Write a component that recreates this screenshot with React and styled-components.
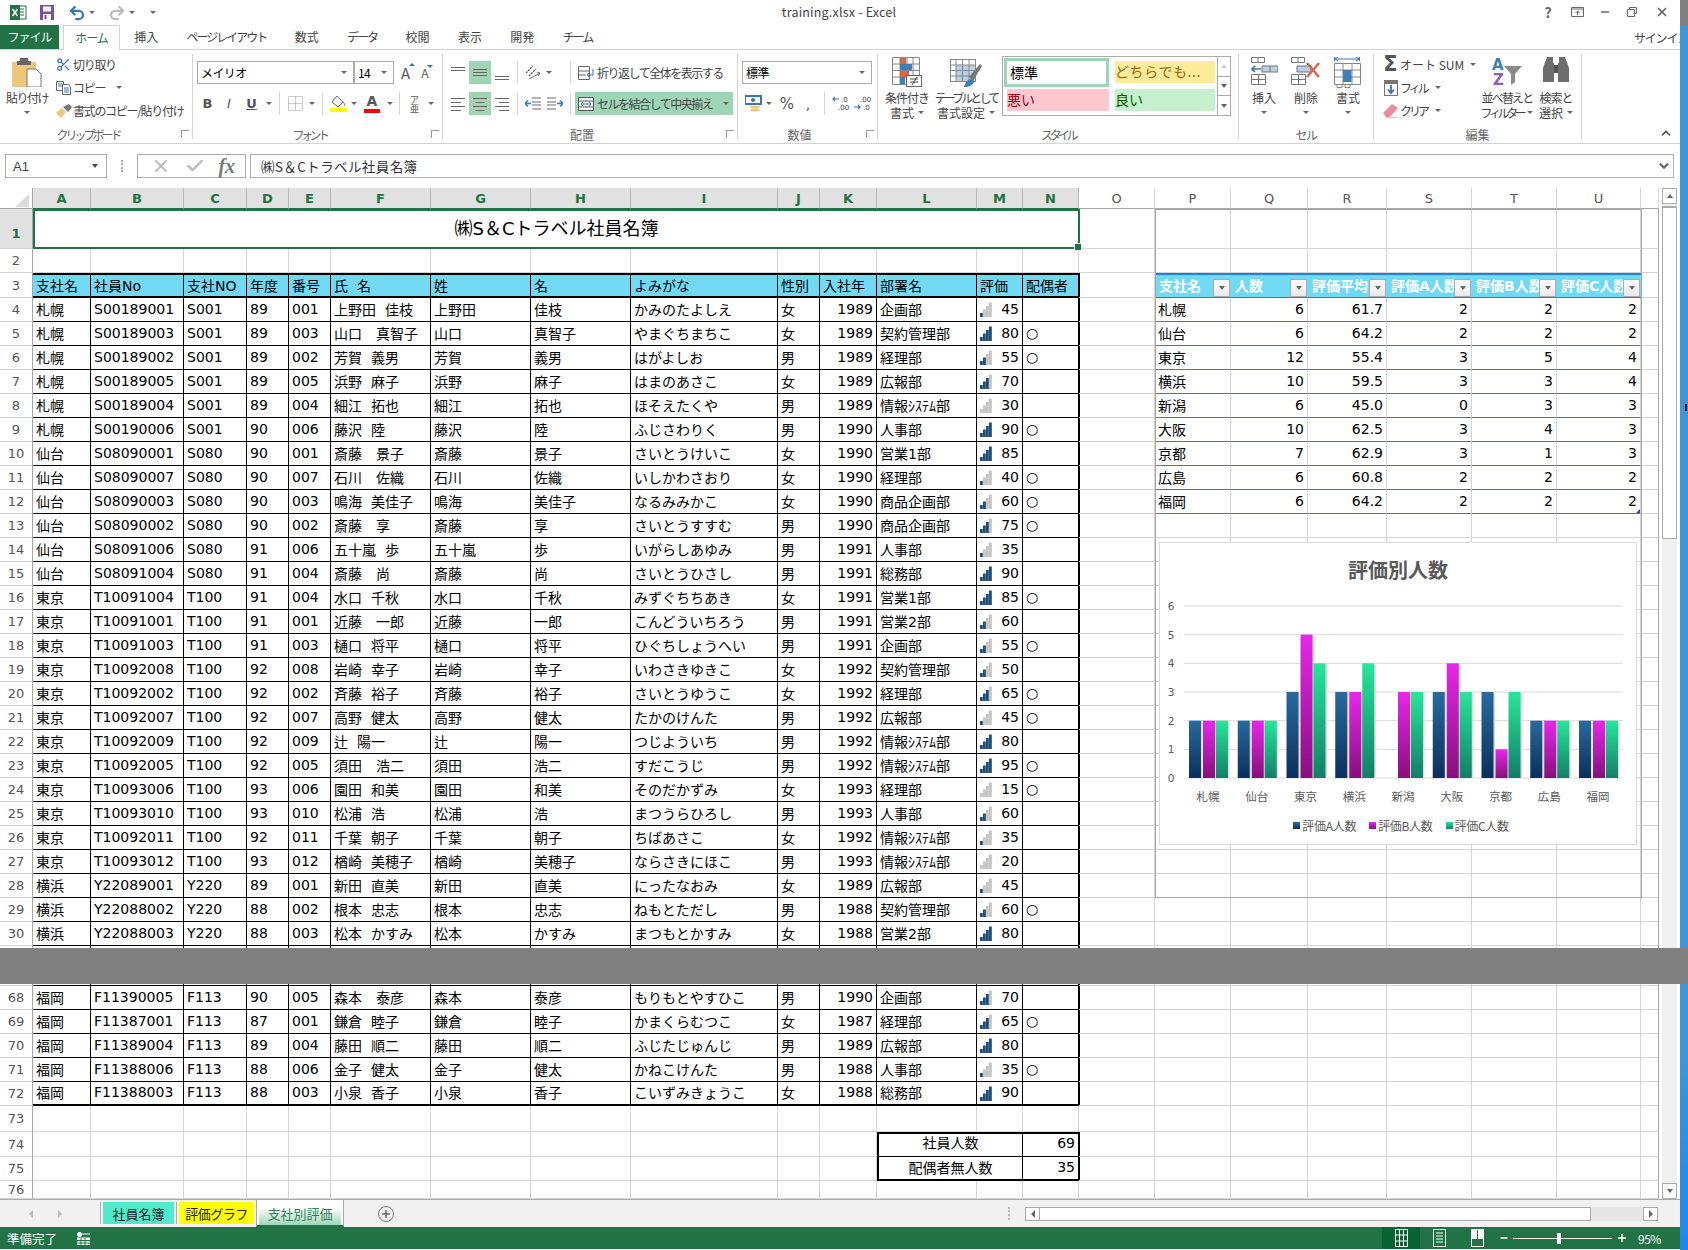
import React from 'react'
import styled, { createGlobalStyle } from 'styled-components'
import { ChevronDown, ChevronUp, Scissors, Undo2, Redo2, X, Check, Plus, Minus } from 'lucide-react'

const uiFont = '"Noto Sans CJK JP", "Noto Sans", sans-serif'
const cellFont = '"DejaVu Sans", "Noto Sans CJK JP", sans-serif'
const GREEN = '#217346'
const GRID = '#d4d4d4'

const GlobalStyle = createGlobalStyle`
  html, body { margin: 0; padding: 0; background: #fff; overflow: hidden; }
  * { box-sizing: border-box; }
`

const Page = styled.div`
  position: relative;
  width: 1688px;
  height: 1250px;
  display: flex;
  overflow: hidden;
  font-family: ${uiFont};
  color: #444;
`
const Main = styled.div`
  width: 1680px;
  display: flex;
  flex-direction: column;
`
const Strip = styled.div`
  position: relative;
  width: 8px;
  background: linear-gradient(#808080 0 26px, #3f95d6 26px, #3f95d6 85%, #1e88e8);
`
const StripMark = styled.i`
  position: absolute;
  left: 5px;
  top: 404px;
  width: 2px;
  height: 7px;
  background: #222;
`
const Band = styled.div`
  position: absolute;
  left: 0;
  top: 948px;
  width: 1688px;
  height: 36px;
  background: #808080;
  z-index: 6;
`

/* title bar */
const TitleBar = styled.div`
  position: relative;
  height: 25px;
  display: flex;
  align-items: center;
  padding-left: 10px;
`
const Qat = styled.div`
  display: flex;
  align-items: center;
  width: ${p => p.$w}px;
  gap: 3px;
`
const Title = styled.div`
  position: absolute;
  left: 0;
  top: 3px;
  width: 1678px;
  text-align: center;
  font-size: 12.5px;
  line-height: 18px;
  letter-spacing: 0.2px;
  color: #444;
`
const WinButtons = styled.div`
  position: absolute;
  right: 0;
  top: 2px;
  display: flex;
  align-items: center;
`
const WinButton = styled.div`
  width: ${p => p.$w || 28}px;
  height: 20px;
  display: flex;
  align-items: center;
  justify-content: center;
  color: #666;
  font-weight: 700;
  font-size: 14px;
`

/* ribbon tabs */
const TabRow = styled.div`
  position: relative;
  height: 25px;
  display: flex;
  border-bottom: 1px solid ${GRID};
  font-size: 12px;
  line-height: 22px;
`
const FileTab = styled.div`
  width: 59px;
  background: ${GREEN};
  color: #fff;
  display: flex;
  align-items: center;
  justify-content: center;
  letter-spacing: -1px;
  margin-right: 4px;
`
const HomeTab = styled.div`
  width: 57px;
  height: 25px;
  background: #fff;
  color: ${GREEN};
  border: 1px solid ${GRID};
  border-bottom: none;
  display: flex;
  align-items: center;
  justify-content: center;
  letter-spacing: -1px;
`
const Tab = styled.div`
  padding: 0 14.2px;
  display: flex;
  align-items: center;
  color: #444;
  letter-spacing: ${p => p.$tight || 0}px;
`
const SignIn = styled.div`
  position: absolute;
  right: -8px;
  top: 2px;
  letter-spacing: -1.2px;
  width: 54px;
  overflow: hidden;
  white-space: nowrap;
`

/* ribbon */
const Ribbon = styled.div`
  height: 94px;
  display: flex;
  border-bottom: 1px solid ${GRID};
  font-size: 12px;
`
const Group = styled.div`
  position: relative;
  width: ${p => p.$w}px;
  height: 85px;
  flex: none;
  margin-top: 4px;
  border-right: ${p => (p.$last ? 'none' : `1px solid ${GRID}`)};
`
const GroupBody = styled.div`
  height: 72px;
  display: flex;
  padding-left: ${p => p.$pl || 0}px;
`
const GroupLabel = styled.div`
  height: 18px;
  line-height: 18px;
  text-align: center;
  font-size: 12px;
  color: #666;
  white-space: nowrap;
  letter-spacing: ${p => p.$ls || 0}px;
  padding-right: ${p => (p.$launcher ? 16 : 0)}px;
`
const Launcher = styled.div`
  position: absolute;
  right: 3px;
  bottom: 1px;
  width: 8px;
  height: 8px;
  border-left: 1px solid #999;
  border-top: 1px solid #999;
`
const BigButton = styled.div`
  width: ${p => p.$w}px;
  flex: none;
  display: flex;
  flex-direction: column;
  align-items: center;
  padding-top: 3px;
  margin-right: ${p => p.$mr || 0}px;
`
const BigIcon = styled.div`
  height: 33px;
  display: flex;
  align-items: flex-start;
  justify-content: center;
`
const BigLabel = styled.div`
  height: 15px;
  line-height: 15px;
  white-space: nowrap;
  letter-spacing: ${p => p.$ls ?? -1}px;
  display: flex;
  align-items: center;
  gap: 4px;
`
const Caret = styled.i`
  display: block;
  flex: none;
  width: 0;
  height: 0;
  border-left: 3px solid transparent;
  border-right: 3px solid transparent;
  border-top: 3px solid #666;
  margin-left: ${p => p.$ml || 0}px;
`
const BigCaret = styled.div`
  height: 15px;
  display: flex;
  align-items: center;
`
const SmallColumn = styled.div`
  width: ${p => p.$w}px;
  flex: none;
  display: flex;
  flex-direction: column;
  margin-top: -1px;
`
const SmallRow = styled.div`
  height: 23px;
  display: flex;
  align-items: center;
  white-space: nowrap;
  letter-spacing: ${p => p.$ls ?? -1.3}px;
`
const SmallIcon = styled.div`
  width: 19px;
  flex: none;
  display: flex;
  justify-content: center;
`
const ToolStack = styled.div`
  display: flex;
  flex-direction: column;
  gap: 8px;
  padding-top: 7px;
`
const ToolRow = styled.div`
  height: 23px;
  display: flex;
  align-items: center;
`
const Tool = styled.div`
  width: ${p => p.$w}px;
  height: 23px;
  flex: none;
  display: flex;
  align-items: center;
  justify-content: center;
  background: ${p => (p.$on ? '#9fd5b7' : 'transparent')};
  color: #555;
  font-family: ${cellFont};
  font-size: ${p => p.$fs || 13}px;
  font-weight: ${p => (p.$bold ? 700 : 400)};
  font-style: ${p => (p.$italic ? 'italic' : 'normal')};
  text-decoration: ${p => (p.$under ? 'underline' : 'none')};
`
const ToolCaret = styled.div`
  width: ${p => p.$w || 10}px;
  flex: none;
  display: flex;
  justify-content: center;
`
const RowSep = styled.div`
  width: ${p => p.$w || 9}px;
  height: 23px;
  flex: none;
  display: flex;
  justify-content: center;
  &::after { content: ''; width: 1px; height: 100%; background: ${GRID}; }
`
const Gap = styled.div`
  width: ${p => p.$w}px;
  flex: none;
`
const Combo = styled.div`
  width: ${p => p.$w}px;
  height: 23px;
  flex: none;
  background: #fff;
  border: 1px solid #ababab;
  margin-left: ${p => p.$ml || 0}px;
  display: flex;
  align-items: center;
  justify-content: space-between;
  padding: 0 6px 0 3px;
  color: #000;
  font-size: 12px;
  letter-spacing: -0.6px;
`
const WideButton = styled.div`
  width: 158px;
  height: 23px;
  flex: none;
  display: flex;
  align-items: center;
  padding-left: 3px;
  gap: 3px;
  white-space: nowrap;
  letter-spacing: -1.5px;
  background: ${p => (p.$on ? '#9fd5b7' : 'transparent')};
`
const Gallery = styled.div`
  width: 229px;
  height: 60px;
  flex: none;
  margin-top: 2px;
  border: 1px solid #ababab;
  display: flex;
`
const GalleryGrid = styled.div`
  flex: 1;
  display: grid;
  grid-template-columns: 108px 106px;
  grid-template-rows: 31px 1fr;
`
const StyleCell = styled.div`
  margin: ${p => p.$m};
  padding: 0 0 2px ${p => (p.$sel ? 3 : 0)}px;
  background: ${p => p.$bg};
  color: ${p => p.$fg};
  border: ${p => (p.$sel ? '3px solid #9fd5b7' : 'none')};
  display: flex;
  align-items: center;
  font-size: 14px;
  letter-spacing: ${p => p.$ls || 0}px;
  white-space: nowrap;
`
const GalleryScroll = styled.div`
  width: 14px;
  border-left: 1px solid #ababab;
  display: flex;
  flex-direction: column;
`
const GalleryButton = styled.div`
  flex: 1;
  display: flex;
  align-items: center;
  justify-content: center;
  color: ${p => (p.$dim ? '#ccc' : '#666')};
  border-bottom: ${p => (p.$end ? 'none' : '1px solid #ababab')};
`
const UpTri = styled.i`
  display: block;
  width: 0;
  height: 0;
  border-left: 3px solid transparent;
  border-right: 3px solid transparent;
  border-bottom: 4px solid currentColor;
`
const DownTri = styled.i`
  display: block;
  width: 0;
  height: 0;
  border-left: 3px solid transparent;
  border-right: 3px solid transparent;
  border-top: 4px solid currentColor;
`
const Collapse = styled.div`
  position: absolute;
  right: 7px;
  bottom: 3px;
  color: #555;
  display: flex;
`
const RibbonFill = styled.div`
  position: relative;
  flex: 1;
`
const SigmaText = styled.span`
  font-family: ${cellFont};
  font-size: 21px;
  font-weight: 700;
  line-height: 1;
  color: #555;
`
const FontA = styled.div`
  display: flex;
  flex-direction: column;
  align-items: center;
  font-weight: 700;
  font-size: 14px;
  line-height: 12px;
  &::after { content: ''; width: 16px; height: 4px; margin-top: 2px; background: #f00; }
`
const GrowA = styled.span`
  font-size: ${p => p.$fs}px;
  position: relative;
  color: #555;
  &::after {
    content: '';
    position: absolute;
    right: -5px;
    top: 1px;
    border-left: 3px solid transparent;
    border-right: 3px solid transparent;
    ${p => (p.$up ? 'border-bottom: 3px solid #3a75b0;' : 'border-top: 3px solid #3a75b0;')}
  }
`
const Ruby = styled.div`
  display: flex;
  flex-direction: column;
  align-items: center;
  line-height: 9px;
  font-family: ${uiFont};
  font-size: 9px;
  color: #555;
`
const NumFormat = styled.div`
  font-family: ${cellFont};
  font-size: ${p => p.$fs || 15}px;
  color: #555;
`

/* formula bar */
const FormulaBar = styled.div`
  height: 44px;
  padding: 10px 6px 8px 5px;
  display: flex;
  align-items: flex-start;
  flex: none;
`
const NameBox = styled.div`
  width: 102px;
  height: 24px;
  border: 1px solid #ababab;
  display: flex;
  align-items: center;
  justify-content: space-between;
  padding: 0 8px 0 7px;
  font-family: "Liberation Sans", sans-serif;
  font-size: 13px;
  color: #444;
`
const Grip = styled.div`
  width: 30px;
  height: 24px;
  display: flex;
  align-items: center;
  justify-content: center;
  &::after { content: ''; height: 12px; border-left: 2px dotted #aaa; }
`
const FxBox = styled.div`
  width: 109px;
  height: 24px;
  border: 1px solid #ababab;
  display: flex;
  align-items: center;
  justify-content: space-around;
  padding: 0 3px 0 6px;
  color: #bfbfbf;
`
const FxText = styled.span`
  font-family: "Liberation Serif", serif;
  font-size: 20px;
  font-style: italic;
  font-weight: 700;
  color: #7a7a7a;
`
const FormulaInput = styled.div`
  flex: 1;
  height: 24px;
  margin-left: 4px;
  border: 1px solid #ababab;
  display: flex;
  align-items: center;
  justify-content: space-between;
  padding: 0 2px 0 10px;
  font-size: 13.5px;
  color: #333;
  letter-spacing: 0.4px;
`

/* sheet */
const COLS = '33px 58px 93px 63px 42px 42px 100px 100px 100px 147px 42px 57px 100px 46px 56px 76px 76px 77px 79px 85px 85px 84px 18px'

const SheetArea = styled.div`
  height: 1011px;
  flex: none;
  display: flex;
`
const Grid = styled.div`
  position: relative;
  width: 1659px;
  height: 1011px;
  overflow: hidden;
  font-family: ${cellFont};
  font-size: 14px;
  color: #000;
`
const SheetRow = styled.div`
  display: grid;
  grid-template-columns: ${COLS};
  height: ${p => p.$h}px;
`
const Corner = styled.div`
  border-right: 1px solid #a6a6a6;
  border-bottom: 1px solid #a6a6a6;
  display: flex;
  align-items: flex-end;
  justify-content: flex-end;
  padding: 0 3px 1px 0;
  &::after {
    content: '';
    border-left: 14px solid transparent;
    border-bottom: 13px solid #dcdcdc;
  }
`
const ColHead = styled.div`
  background: ${p => (p.$on ? '#e1e1e1' : '#fff')};
  color: ${p => (p.$on ? GREEN : '#555')};
  font-weight: ${p => (p.$on ? 700 : 400)};
  border-right: 1px solid ${p => (p.$on ? '#b5b5b5' : GRID)};
  border-bottom: 1px solid ${p => (p.$on ? GREEN : '#a6a6a6')};
  display: flex;
  align-items: center;
  justify-content: center;
  font-size: 13px;
`
const RowHead = styled.div`
  background: ${p => (p.$on ? '#e1e1e1' : '#fff')};
  color: ${p => (p.$on ? GREEN : '#555')};
  font-weight: ${p => (p.$on ? 700 : 400)};
  border-right: 1px solid #a6a6a6;
  border-bottom: 1px solid ${GRID};
  padding-top: ${p => (p.$on ? 10 : 0)}px;
  display: flex;
  align-items: center;
  justify-content: center;
  font-size: 13px;
`
const Cell = styled.div`
  position: relative;
  grid-column: span ${p => p.$span || 1};
  display: flex;
  align-items: center;
  justify-content: ${p => ({ r: 'flex-end', c: 'center' }[p.$align] || 'flex-start')};
  padding: 0 3px ${p => p.$pb ?? 2}px 3px;
  white-space: pre;
  overflow: hidden;
  border-right: ${p => (p.$thickR ? '2px solid #000' : `1px solid ${p.$black ? '#000' : GRID}`)};
  margin-right: ${p => (p.$thickR ? -1 : 0)}px;
  border-bottom: ${p => (p.$thickB ? '2px solid #000' : `1px solid ${p.$black ? '#000' : GRID}`)};
  border-top: ${p => (p.$thickT ? '2px solid #000' : 'none')};
  border-left: ${p => (p.$thickL ? '2px solid #000' : 'none')};
  background: ${p => p.$bg || 'transparent'};
`
const RightEdge = styled.div`
  border-right: 1px solid #a6a6a6;
  border-bottom: 1px solid ${GRID};
`
const SheetTitle = styled.div`
  position: relative;
  grid-column: span 14;
  margin-right: -1px;
  padding-bottom: 5px;
  border: 2px solid ${GREEN};
  display: flex;
  align-items: center;
  justify-content: center;
  font-size: 18px;
  font-family: ${cellFont};
  z-index: 2;
`
const FillHandle = styled.i`
  position: absolute;
  right: -4px;
  bottom: -4px;
  width: 6px;
  height: 6px;
  background: ${GREEN};
  border: 1px solid #fff;
  box-sizing: content-box;
`
const TableHead = styled(Cell)`
  background: #72d9f5;
  color: #000;
`
const PivotHead = styled(Cell)`
  background: #72d9f5;
  color: #fff;
  font-weight: 700;
  border-top: 2px solid #1e7fe8;
  border-bottom: 1px solid #1e7fe8;
  border-right: none;
  padding-left: 4px;
  overflow: hidden;
`
const PivotCell = styled(Cell)`
  border-bottom: 1px solid #1e7fe8;
`
const FilterButton = styled.div`
  position: absolute;
  right: 1px;
  bottom: 0;
  width: 17px;
  height: 18px;
  border: 1px solid #ababab;
  background: linear-gradient(#fff, #e9e9e9);
  color: #666;
  display: flex;
  align-items: center;
  justify-content: center;
`
const RatingCell = styled(Cell)`
  justify-content: space-between;
  padding-right: 3px;
`
const TableCorner = styled.i`
  position: absolute;
  right: 0;
  bottom: 0;
  border-left: 4px solid transparent;
  border-bottom: 4px solid #2a50b8;
`
const PageFrame = styled.div`
  position: absolute;
  left: 1155px;
  top: 21px;
  width: 487px;
  height: 689px;
  border: 1px solid #a6a6a6;
  pointer-events: none;
  z-index: 1;
`

/* chart */
const ChartPanel = styled.div`
  position: absolute;
  left: 1159px;
  top: 354px;
  width: 478px;
  height: 303px;
  background: #fff;
  border: 1px solid #d9d9d9;
  display: flex;
  flex-direction: column;
  font-family: ${uiFont};
  z-index: 3;
`
const ChartTitle = styled.div`
  height: 53px;
  display: flex;
  align-items: center;
  justify-content: center;
  font-size: 20px;
  font-weight: 700;
  color: #595959;
`
const Legend = styled.div`
  flex: 1;
  display: flex;
  align-items: center;
  justify-content: center;
  gap: 13px;
  font-size: 12px;
  color: #595959;
  letter-spacing: -0.3px;
  padding: 0 0 6px 6px;
`
const LegendItem = styled.div`
  display: flex;
  align-items: center;
  gap: 2px;
`
const LegendSwatch = styled.i`
  width: 7px;
  height: 7px;
  background: linear-gradient(${p => p.$top}, ${p => p.$bottom});
`

/* scrollbars */
const VScroll = styled.div`
  width: 15px;
  height: 1011px;
  margin: 0 3px;
  display: flex;
  flex-direction: column;
  background: #f0f0f0;
`
const ScrollButton = styled.div`
  height: 16px;
  flex: none;
  background: #fff;
  border: 1px solid #ababab;
  color: #666;
  display: flex;
  align-items: center;
  justify-content: center;
`
const VThumb = styled.div`
  height: 333px;
  flex: none;
  margin-top: 2px;
  background: #fff;
  border: 1px solid #ababab;
  border-top: 2px solid #ababab;
`
const VTrack = styled.div`
  flex: 1;
`

/* sheet tabs */
const TabBar = styled.div`
  position: relative;
  height: 28px;
  flex: none;
  display: flex;
  align-items: flex-start;
  background: #f1f1f1;
  border-top: 1px solid #ababab;
  font-size: 13px;
  color: #bbb;
`
const NavArrow = styled.div`
  width: ${p => p.$w}px;
  height: 27px;
  display: flex;
  align-items: center;
  justify-content: flex-end;
  color: #bbb;
`
const LeftTri = styled.i`
  border-top: 4px solid transparent;
  border-bottom: 4px solid transparent;
  border-right: 4px solid currentColor;
`
const RightTri = styled.i`
  border-top: 4px solid transparent;
  border-bottom: 4px solid transparent;
  border-left: 4px solid currentColor;
`
const TabSep = styled.div`
  width: 1px;
  height: 22px;
  margin: 2px 2px 0 ${p => p.$ml || 0}px;
  background: #ababab;
`
const SheetTab = styled.div`
  width: ${p => p.$w}px;
  height: 22px;
  margin-top: 2px;
  background: ${p => p.$bg};
  color: #222;
  display: flex;
  align-items: center;
  justify-content: center;
  letter-spacing: ${p => p.$ls || 0}px;
`
const ActiveTab = styled.div`
  width: 88px;
  height: 28px;
  margin: -1px 0 0 2px;
  padding: 1px 2px 0;
  background: #fff;
  border: 1px solid #ababab;
  border-bottom: 2px solid ${GREEN};
  color: #2f7f5b;
  display: flex;
  align-items: stretch;
`
const ActiveInner = styled.div`
  flex: 1;
  background: linear-gradient(#fff 30%, #9fd5b7);
  display: flex;
  align-items: center;
  justify-content: center;
`
const AddSheet = styled.div`
  position: absolute;
  left: 378px;
  top: 6px;
  width: 16px;
  height: 16px;
  border: 1px solid #777;
  border-radius: 50%;
  color: #666;
  display: flex;
  align-items: center;
  justify-content: center;
`
const HScrollGrip = styled.div`
  position: absolute;
  left: 1008px;
  top: 7px;
  height: 13px;
  border-left: 2px dotted #bbb;
`
const HScroll = styled.div`
  position: absolute;
  left: 1025px;
  top: 7px;
  width: 633px;
  height: 14px;
  display: flex;
  background: #e6e6e6;
`
const HScrollButton = styled.div`
  width: 15px;
  background: #fff;
  border: 1px solid #ababab;
  color: #666;
  display: flex;
  align-items: center;
  justify-content: center;
`
const HThumb = styled.div`
  width: 551px;
  background: #fff;
  border: 1px solid #ababab;
  border-left: none;
`
const HTrack = styled.div`
  flex: 1;
`

/* status bar */
const StatusBar = styled.div`
  position: relative;
  height: 22px;
  flex: none;
  background: ${GREEN};
  color: #fff;
  display: flex;
  align-items: center;
  padding-left: 7px;
  font-size: 12.5px;
`
const StatusRight = styled.div`
  position: absolute;
  left: 1382px;
  top: 0;
  height: 22px;
  display: flex;
  align-items: center;
`
const ViewButton = styled.div`
  width: ${p => p.$w}px;
  height: 22px;
  display: flex;
  align-items: center;
  justify-content: center;
  background: ${p => (p.$on ? '#0a6332' : 'transparent')};
`
const ZoomTrack = styled.div`
  position: relative;
  width: 99px;
  height: 1px;
  margin: 0 4px;
  background: #fff;
`
const ZoomThumb = styled.i`
  position: absolute;
  left: 44px;
  top: -5px;
  width: 4px;
  height: 11px;
  background: #fff;
`
const ZoomText = styled.div`
  margin-left: 10px;
  font-size: 12px;
  letter-spacing: -0.5px;
`

/* icons */
const ExcelIcon = () => (
  <svg width="17" height="17" viewBox="0 0 17 17">
    <rect x="6" y="2" width="10" height="13" fill="#fff" stroke={GREEN} />
    <path d="M9 5h5M9 8h5M9 11h5" stroke={GREEN} />
    <rect x="0" y="1" width="10" height="15" fill={GREEN} />
    <path d="M2.500 5l5 7M7.500 5l-5 7" stroke="#fff" strokeWidth="1.6" />
  </svg>
)
const SaveIcon = () => (
  <svg width="14" height="15" viewBox="0 0 14 15">
    <path d="M0 0h14v15H0z" fill="#7f4ea0" />
    <rect x="3" y="1.500" width="8" height="5" fill="#fff" />
    <rect x="3" y="9" width="8" height="6" fill="#fff" />
    <rect x="4.500" y="10" width="2" height="4" fill="#7f4ea0" />
  </svg>
)
const PasteIcon = () => (
  <svg width="30" height="30" viewBox="0 0 30 30">
    <rect x="0" y="5" width="24" height="25" rx="1" fill="#efc77c" />
    <path d="M8 1h8v3h3v4H5V4h3z" fill="#666" />
    <path d="M15 12h9l5 5v13H15z" fill="#fff" stroke="#777" />
  </svg>
)
const CopyIcon = () => (
  <svg width="15" height="14" viewBox="0 0 15 14">
    <path d="M.5.5h7v9h-7z" fill="#fff" stroke="#666" />
    <path d="M6.500 3.500h6l2 2v8h-8z" fill="#fff" stroke="#666" />
    <path d="M8 7h5M8 9h5M8 11h5M2 3h4M2 5h4" stroke="#3a75b0" />
  </svg>
)
const BrushIcon = () => (
  <svg width="16" height="14" viewBox="0 0 16 14">
    <path d="M0 9l6-5 4 4-5 6z" fill="#efc77c" />
    <path d="M7 3l6-3 3 3-4 5z" fill="#777" />
  </svg>
)
const BorderIcon = () => (
  <svg width="15" height="15" viewBox="0 0 15 15">
    <path d="M.5.5h14v14H.5zM7.500.5v14M.5 7.500h14" fill="none" stroke="#999" strokeDasharray="1 1" />
  </svg>
)
const FillIcon = () => (
  <svg width="17" height="17" viewBox="0 0 17 17">
    <path d="M7 1l6 6-5 5-6-5z" fill="#fff" stroke="#666" />
    <path d="M13 7c2 2 2 3 1 4" stroke="#666" fill="none" />
    <rect x="0" y="13" width="17" height="4" fill="#ff0" />
  </svg>
)
const Lines = ({ align = 'left', v = 'full' }) => {
  const widths = [14, align === 'center' ? 9 : 10, 14, align === 'center' ? 9 : 10]
  const x = w => (align === 'left' ? 0 : align === 'right' ? 14 - w : (14 - w) / 2)
  const all = v === 'top' ? [3, 6] : v === 'bottom' ? [12, 15] : v === 'mid' ? [5, 8, 11] : [3, 7, 11, 15]
  return (
    <svg width="14" height="17" viewBox="0 0 14 17">
      {all.map((y, i) => (
        <rect key={y} x={v === 'full' ? x(widths[i]) : 0} y={y} width={v === 'full' ? widths[i] : 14} height="1" fill="#666" />
      ))}
    </svg>
  )
}
const OrientIcon = () => (
  <svg width="17" height="15" viewBox="0 0 17 15">
    <path d="M1 8l7-7M4 11l7-7" stroke="#666" strokeWidth="1.5" strokeDasharray="2 1" />
    <path d="M4 14l11-6M15 8l-3-1M15 8l-2 3" stroke="#666" fill="none" />
  </svg>
)
const IndentIcon = ({ flip }) => (
  <svg width="16" height="13" viewBox="0 0 16 13" style={flip ? { transform: 'scaleX(-1)' } : undefined}>
    <path d="M7 1h9M7 5h9M7 8h9M7 12h9" stroke="#666" />
    <path d="M0 6.500h6M3 3.500l-3 3 3 3" stroke="#3a75b0" strokeWidth="1.4" fill="none" />
  </svg>
)
const WrapIcon = () => (
  <svg width="16" height="14" viewBox="0 0 16 14">
    <path d="M.5.5h11v13H.5zM.5 5h11M.5 9h7" fill="none" stroke="#666" />
    <path d="M15 3v6h-6M11 7l-2 2 2 2" fill="none" stroke="#3a75b0" />
  </svg>
)
const MergeIcon = () => (
  <svg width="16" height="14" viewBox="0 0 16 14">
    <path d="M.5.5h15v13H.5zM.5 4h15M.5 10h15" fill="#fff" stroke="#555" />
    <path d="M3 7h10M5 5l-2 2 2 2M11 5l2 2-2 2" fill="none" stroke="#3a75b0" />
  </svg>
)
const MoneyIcon = () => (
  <svg width="17" height="17" viewBox="0 0 17 17">
    <rect x="0" y="1" width="16" height="8" fill="#fff" stroke="#3a75b0" strokeWidth="2" />
    <circle cx="8" cy="5" r="2" fill="#3a75b0" />
    <ellipse cx="10" cy="12" rx="5" ry="1.6" fill="#efc77c" />
    <ellipse cx="10" cy="15" rx="5" ry="1.6" fill="#efc77c" />
  </svg>
)
const DecimalIcon = ({ inc }) => (
  <svg width="18" height="15" viewBox="0 0 18 15" fontFamily="DejaVu Sans" fontSize="7" fill="#444">
    {inc ? (
      <>
        <text x="6" y="6">.00</text>
        <text x="9" y="14">.0</text>
        <path d="M0 11h6M4 9l2 2-2 2" stroke="#3a75b0" fill="none" strokeWidth="1.2" />
      </>
    ) : (
      <>
        <text x="9" y="6">.0</text>
        <text x="6" y="14">.00</text>
        <path d="M1 3h6M3 1L1 3l2 2" stroke="#3a75b0" fill="none" strokeWidth="1.2" />
      </>
    )}
  </svg>
)
const CondIcon = () => (
  <svg width="30" height="30" viewBox="0 0 30 30">
    <path d="M.5.5h27v27H.5zM.5 7h27M.5 13.500h27M.5 20h27M8 .5v27M15 .5v27M21 .5v27" fill="#fff" stroke="#888" />
    <rect x="8" y="1" width="6" height="6" fill="#d4674a" />
    <rect x="8" y="7" width="12" height="6" fill="#3f7fb8" />
    <rect x="8" y="14" width="9" height="6" fill="#d4674a" />
    <rect x="8" y="20" width="5" height="7" fill="#3f7fb8" />
    <rect x="14.500" y="18.500" width="15" height="11" fill="#fff" stroke="#666" />
    <path d="M18 22h8M18 25h8M25 20l-5 8" stroke="#444" />
  </svg>
)
const TableIcon = () => (
  <svg width="32" height="30" viewBox="0 0 32 30">
    <rect x=".5" y="2.500" width="25" height="22" fill="#fff" stroke="#888" />
    <rect x="6" y="8" width="19" height="16" fill="#b8cfe6" />
    <path d="M.5 8h25M.5 13.500h25M.5 19h25M6 2.500v22M12.500 2.500v22M19 2.500v22" stroke="#888" fill="none" />
    <path d="M19 20l11-13 2 2-9 15z" fill="#777" />
    <path d="M14 30c1-5 4-8 8-8l2 2c0 4-5 6-10 6z" fill="#3f7fb8" />
  </svg>
)
const InsertIcon = () => (
  <svg width="27" height="28" viewBox="0 0 27 28">
    <path d="M.5.5h13v5H.5zM7 .5v5" fill="#fff" stroke="#777" />
    <rect x="11" y="9" width="16" height="6" fill="#b8cfe6" stroke="#777" />
    <path d="M19 9v6" stroke="#777" />
    <path d="M1 12h9M4 9l-3 3 3 3" stroke="#3a75b0" strokeWidth="1.6" fill="none" />
    <path d="M.5 17.500h14v10H.5zM7.500 17.500v10M.5 22.500h14" fill="#fff" stroke="#777" />
  </svg>
)
const DeleteIcon = () => (
  <svg width="30" height="28" viewBox="0 0 30 28">
    <path d="M.5.5h13v5H.5zM7 .5v5" fill="#fff" stroke="#777" />
    <path d="M6 9h14v6H6z" fill="#b8cfe6" stroke="#777" />
    <path d="M.5 17.500h14v10H.5zM7.500 17.500v10M.5 22.500h14" fill="#fff" stroke="#777" />
    <path d="M16 6l12 14M28 6L16 20" stroke="#d4674a" strokeWidth="2.4" />
  </svg>
)
const FormatIcon = () => (
  <svg width="28" height="32" viewBox="0 0 28 32">
    <path d="M1 2h24M1 2l3-2M1 2l3 2M25 2l-3-2M25 2l-3 2M.5 0v4M25.500 0v4" stroke="#3a75b0" fill="none" />
    <path d="M.5 6.500h26v21H.5zM.5 13h26M.5 20h26M9 6.500v21M18 6.500v21" fill="#fff" stroke="#888" />
    <rect x="9" y="13" width="8.500" height="12" fill="#3f7fb8" />
    <path d="M3 27.500v3h5v-3M11 27.500v3h5v-3" fill="none" stroke="#888" />
  </svg>
)
const FillDownIcon = () => (
  <svg width="14" height="16" viewBox="0 0 14 16">
    <rect x=".5" y=".5" width="13" height="15" fill="#fff" stroke="#777" />
    <rect x="0" y="0" width="14" height="4" fill="#777" />
    <path d="M7 5v8M4 9.500L7 13l3-3.500" stroke="#3a75b0" strokeWidth="1.8" fill="none" />
  </svg>
)
const EraserIcon = () => (
  <svg width="15" height="15" viewBox="0 0 15 15">
    <path d="M0 10L9 1l6 4-8 9H3z" fill="#ee8a9e" />
    <path d="M3 15h12" stroke="#999" />
  </svg>
)
const SortIcon = () => (
  <svg width="30" height="29" viewBox="0 0 30 29" fontFamily="DejaVu Sans" fontWeight="700" fontSize="15">
    <text x="0" y="13" fill="#3f7fb8">A</text>
    <text x="1" y="28" fill="#8f5db5">Z</text>
    <path d="M12 9h18l-7 8v8l-4 3V17z" fill="#8a8a8a" />
  </svg>
)
const BinocularsIcon = () => (
  <svg width="26" height="25" viewBox="0 0 26 25">
    <path d="M4 0h6v6h1v19H0V11zM16 0h6l4 11v14H15V6h1z" fill="#6e6e6e" />
    <rect x="11" y="8" width="4" height="8" fill="#555" />
  </svg>
)
const ReadyMacro = () => (
  <svg width="13" height="13" viewBox="0 0 13 13" style={{ marginLeft: 20 }}>
    <circle cx="2.500" cy="2.500" r="2.500" fill="#fff" />
    <path d="M5 2h8M0 6h13v7H0z" fill="#fff" stroke="#fff" />
    <path d="M0 8.500h13M0 11h13M4 6v7M8 6v7" stroke={GREEN} />
  </svg>
)
const NormalView = () => (
  <svg width="13" height="18" viewBox="0 0 13 18">
    <path d="M.5.5h12v17H.5zM.5 6h12M.5 12h12M4.500.5v17M8.500.5v17" fill="none" stroke="#fff" />
  </svg>
)
const LayoutView = () => (
  <svg width="13" height="18" viewBox="0 0 13 18">
    <rect x=".5" y=".5" width="12" height="17" fill="none" stroke="#fff" />
    <path d="M3 4h7M3 7h7M3 10h7M3 13h7" stroke="#fff" />
  </svg>
)
const BreakView = () => (
  <svg width="13" height="18" viewBox="0 0 13 18">
    <rect x=".5" y=".5" width="12" height="17" fill="none" stroke="#fff" />
    <path d="M1 0h5v10H1zM7 0h5v10H7z" fill="#fff" />
  </svg>
)

const RatingBars = ({ value }) => {
  const on = value >= 79 ? 4 : value >= 63 ? 3 : value >= 47 ? 2 : value >= 31 ? 1 : 0
  return (
    <svg width="12" height="16" viewBox="0 0 12 16" style={{ flex: 'none', marginTop: 3 }}>
      {[0, 1, 2, 3].map(i => (
        <rect
          key={i}
          x={i * 3}
          y={11 - i * 3.5}
          width="2.800"
          height={4 + i * 3.5}
          fill={i < on ? '#1f4e7d' : '#c4c4c4'}
        />
      ))}
    </svg>
  )
}

const chartData = [
  ['札幌', 2, 2, 2], ['仙台', 2, 2, 2], ['東京', 3, 5, 4], ['横浜', 3, 3, 4], ['新潟', 0, 3, 3],
  ['大阪', 3, 4, 3], ['京都', 3, 1, 3], ['広島', 2, 2, 2], ['福岡', 2, 2, 2],
]
const series = [
  { id: 'a', name: '評価A人数', top: '#2a6a9e', bottom: '#0a2f5c', dx: 0 },
  { id: 'b', name: '評価B人数', top: '#e628ea', bottom: '#870f7c', dx: 14 },
  { id: 'c', name: '評価C人数', top: '#28e69a', bottom: '#127e68', dx: 27 },
]

const Chart = () => {
  const y0 = 182
  const step = 28.67
  return (
    <ChartPanel>
      <ChartTitle>評価別人数</ChartTitle>
      <svg width="476" height="216" viewBox="0 0 476 216" fontSize="11.500" fill="#595959">
        <defs>
          {series.map(s => (
            <linearGradient key={s.id} id={s.id} x1="0" y1="0" x2="0" y2="1">
              <stop offset="0" stopColor={s.top} />
              <stop offset="1" stopColor={s.bottom} />
            </linearGradient>
          ))}
        </defs>
        {[0, 1, 2, 3, 4, 5, 6].map(n => (
          <g key={n}>
            <line x1="24" x2="463" y1={y0 - n * step} y2={y0 - n * step} stroke="#d9d9d9" />
            <text x="11" y={y0 - n * step + 4} textAnchor="middle" fontFamily="DejaVu Sans" fontSize="10.500">{n}</text>
          </g>
        ))}
        {chartData.map(([label, ...vals], i) => (
          <g key={label}>
            {vals.map((v, k) => {
              if (!v) return null
              const x = 29 + i * 48.75 + series[k].dx
              return (
                <g key={k}>
                  <rect x={x + 1.5} y={y0 - v * step + 1} width="12" height={v * step - 1} fill="#ddd" />
                  <rect x={x} y={y0 - v * step} width="12" height={v * step} fill={`url(#${series[k].id})`} />
                </g>
              )
            })}
            <text x={48 + i * 48.75} y="205" textAnchor="middle">{label}</text>
          </g>
        ))}
      </svg>
      <Legend>
        {series.map(s => (
          <LegendItem key={s.id}>
            <LegendSwatch $top={s.top} $bottom={s.bottom} />
            {s.name}
          </LegendItem>
        ))}
      </Legend>
    </ChartPanel>
  )
}

const COL_LETTERS = 'ABCDEFGHIJKLMN'.split('')
const EXTRA_LETTERS = ['O', 'P', 'Q', 'R', 'S', 'T', 'U', '']

const headers = ['支社名', '社員No', '支社NO', '年度', '番号', '氏  名', '姓', '名', 'よみがな', '性別', '入社年', '部署名', '評価', '配偶者']
const pivotHeaders = ['支社名', '人数', '評価平均', '評価A人数', '評価B人数', '評価C人数']
const pivotRows = [
  ['札幌', 6, '61.7', 2, 2, 2], ['仙台', 6, '64.2', 2, 2, 2], ['東京', 12, '55.4', 3, 5, 4],
  ['横浜', 10, '59.5', 3, 3, 4], ['新潟', 6, '45.0', 0, 3, 3], ['大阪', 10, '62.5', 3, 4, 3],
  ['京都', 7, '62.9', 3, 1, 3], ['広島', 6, '60.8', 2, 2, 2], ['福岡', 6, '64.2', 2, 2, 2],
]

const topRows = `札幌,S00189001,S001,89,001,上野田 佳枝,かみのたよしえ,女,1989,企画部,45,
札幌,S00189003,S001,89,003,山口　真智子,やまぐちまちこ,女,1989,契約管理部,80,○
札幌,S00189002,S001,89,002,芳賀 義男,はがよしお,男,1989,経理部,55,○
札幌,S00189005,S001,89,005,浜野 麻子,はまのあさこ,女,1989,広報部,70,
札幌,S00189004,S001,89,004,細江 拓也,ほそえたくや,男,1989,情報ｼｽﾃﾑ部,30,
札幌,S00190006,S001,90,006,藤沢 陸,ふじさわりく,男,1990,人事部,90,○
仙台,S08090001,S080,90,001,斎藤　景子,さいとうけいこ,女,1990,営業1部,85,
仙台,S08090007,S080,90,007,石川　佐織,いしかわさおり,女,1990,経理部,40,○
仙台,S08090003,S080,90,003,鳴海 美佳子,なるみみかこ,女,1990,商品企画部,60,○
仙台,S08090002,S080,90,002,斎藤　享,さいとうすすむ,男,1990,商品企画部,75,○
仙台,S08091006,S080,91,006,五十嵐 歩,いがらしあゆみ,男,1991,人事部,35,
仙台,S08091004,S080,91,004,斎藤　尚,さいとうひさし,男,1991,総務部,90,
東京,T10091004,T100,91,004,水口 千秋,みずぐちちあき,女,1991,営業1部,85,○
東京,T10091001,T100,91,001,近藤　一郎,こんどういちろう,男,1991,営業2部,60,
東京,T10091003,T100,91,003,樋口 将平,ひぐちしょうへい,男,1991,企画部,55,○
東京,T10092008,T100,92,008,岩崎 幸子,いわさきゆきこ,女,1992,契約管理部,50,
東京,T10092002,T100,92,002,斉藤 裕子,さいとうゆうこ,女,1992,経理部,65,○
東京,T10092007,T100,92,007,高野 健太,たかのけんた,男,1992,広報部,45,○
東京,T10092009,T100,92,009,辻 陽一,つじよういち,男,1992,情報ｼｽﾃﾑ部,80,
東京,T10092005,T100,92,005,須田　浩二,すだこうじ,男,1992,情報ｼｽﾃﾑ部,95,○
東京,T10093006,T100,93,006,園田 和美,そのだかずみ,女,1993,経理部,15,○
東京,T10093010,T100,93,010,松浦 浩,まつうらひろし,男,1993,人事部,60,
東京,T10092011,T100,92,011,千葉 朝子,ちばあさこ,女,1992,情報ｼｽﾃﾑ部,35,
東京,T10093012,T100,93,012,楢崎 美穂子,ならさきにほこ,男,1993,情報ｼｽﾃﾑ部,20,
横浜,Y22089001,Y220,89,001,新田 直美,にったなおみ,女,1989,広報部,45,
横浜,Y22088002,Y220,88,002,根本 忠志,ねもとただし,男,1988,契約管理部,60,○
横浜,Y22088003,Y220,88,003,松本 かすみ,まつもとかすみ,女,1988,営業2部,80,`.split('\n')

const endRows = `福岡,F11390005,F113,90,005,森本　泰彦,もりもとやすひこ,男,1990,企画部,70,
福岡,F11387001,F113,87,001,鎌倉 睦子,かまくらむつこ,女,1987,経理部,65,○
福岡,F11389004,F113,89,004,藤田 順二,ふじたじゅんじ,男,1989,広報部,80,
福岡,F11388006,F113,88,006,金子 健太,かねこけんた,男,1988,人事部,35,○
福岡,F11388003,F113,88,003,小泉 香子,こいずみきょうこ,女,1988,総務部,90,`.split('\n')

const Blanks = ({ n, black, thickR }) =>
  Array.from({ length: n }, (_, i) => <Cell key={i} $black={black} $thickR={thickR && i === n - 1} />)

const RightSide = ({ pivot, last }) => (
  <>
    <Cell />
    {pivot ? (
      pivot.map((v, i) => (
        <PivotCell key={i} $align={i ? 'r' : 'l'}>
          {v}
          {last && i === 5 && <TableCorner />}
        </PivotCell>
      ))
    ) : (
      <Blanks n={6} />
    )}
    <RightEdge />
  </>
)

const DataRow = ({ n, line, pivot, last, lastRow }) => {
  const [branch, id, code, year, num, name, kana, sex, joined, dept, score, spouse] = line.split(',')
  const [family, given] = name.split(/[ 　]/)
  const full = name.includes('　') ? name : `${family}  ${given}`
  const cells = [branch, id, code, year, num, full, family, given, kana, sex]
  const thickB = lastRow
  return (
    <SheetRow $h={24}>
      <RowHead>{n}</RowHead>
      {cells.map((v, i) => (
        <Cell key={i} $black $thickB={thickB}>{v}</Cell>
      ))}
      <Cell $black $thickB={thickB} $align="r">{joined}</Cell>
      <Cell $black $thickB={thickB}>{dept}</Cell>
      <RatingCell $black $thickB={thickB}>
        <RatingBars value={Number(score)} />
        {score}
      </RatingCell>
      <Cell $black $thickB={thickB} $thickR>{spouse}</Cell>
      <RightSide pivot={pivot} last={last} />
    </SheetRow>
  )
}

const EmptyRow = ({ n, h }) => (
  <SheetRow $h={h}>
    <RowHead>{n}</RowHead>
    <Blanks n={14} />
    <RightSide />
  </SheetRow>
)

const Sheet = () => (
  <Grid>
    <SheetRow $h={21}>
      <Corner />
      {COL_LETTERS.map(c => (
        <ColHead key={c} $on>{c}</ColHead>
      ))}
      {EXTRA_LETTERS.map((c, i) => (
        <ColHead key={i}>{c}</ColHead>
      ))}
    </SheetRow>
    <SheetRow $h={40}>
      <RowHead $on>1</RowHead>
      <SheetTitle>
        ㈱S＆Cトラベル社員名簿
        <FillHandle />
      </SheetTitle>
      <RightSide />
    </SheetRow>
    <EmptyRow n={2} h={24} />
    <SheetRow $h={25}>
      <RowHead>3</RowHead>
      {headers.map((h, i) => (
        <TableHead key={h} $black $thickT $thickB $thickR={i === 13}>{h}</TableHead>
      ))}
      <Cell />
      {pivotHeaders.map(h => (
        <PivotHead key={h}>
          {h}
          <FilterButton><DownTri /></FilterButton>
        </PivotHead>
      ))}
      <RightEdge />
    </SheetRow>
    {topRows.map((line, i) => (
      <DataRow key={i} n={i + 4} line={line} pivot={pivotRows[i]} last={i === 8} />
    ))}
    <SheetRow $h={40}>
      <RowHead />
      <Blanks n={14} black thickR />
      <RightSide />
    </SheetRow>
    {endRows.map((line, i) => (
      <DataRow key={i} n={i + 68} line={line} lastRow={i === 4} />
    ))}
    <SheetRow $h={26}>
      <RowHead>73</RowHead>
      <Blanks n={14} />
      <RightSide />
    </SheetRow>
    <SheetRow $h={25}>
      <RowHead>74</RowHead>
      <Blanks n={11} />
      <Cell $span={2} $black $thickL $thickT $align="c" $pb={6}>社員人数</Cell>
      <Cell $black $thickR $thickT $align="r" $pb={5}>69</Cell>
      <RightSide />
    </SheetRow>
    <SheetRow $h={24}>
      <RowHead>75</RowHead>
      <Blanks n={11} />
      <Cell $span={2} $black $thickL $thickB $align="c" $pb={3}>配偶者無人数</Cell>
      <Cell $black $thickR $thickB $align="r" $pb={2}>35</Cell>
      <RightSide />
    </SheetRow>
    <EmptyRow n={76} h={18} />
    <PageFrame />
    <Chart />
  </Grid>
)

/* lines: [text, letter spacing] pairs */
const Big = ({ w, mr, icon, lines, caretLine }) => (
  <BigButton $w={w} $mr={mr}>
    <BigIcon>{icon}</BigIcon>
    {lines.map(([t, ls], i) => (
      <BigLabel key={t} $ls={ls}>
        {t}
        {caretLine && i === lines.length - 1 && <Caret />}
      </BigLabel>
    ))}
    {!caretLine && <BigCaret><Caret /></BigCaret>}
  </BigButton>
)

const RibbonBody = () => (
  <Ribbon>
    <Group $w={193}>
      <GroupBody $pl={6}>
        <Big w={42} mr={6} icon={<PasteIcon />} lines={[['貼り付け', -1.5]]} />
        <SmallColumn $w={130}>
          <SmallRow><SmallIcon><Scissors size={15} color="#3a75b0" /></SmallIcon>切り取り</SmallRow>
          <SmallRow><SmallIcon><CopyIcon /></SmallIcon>コピー<Caret $ml={11} /></SmallRow>
          <SmallRow><SmallIcon><BrushIcon /></SmallIcon>書式のコピー/貼り付け</SmallRow>
        </SmallColumn>
      </GroupBody>
      <GroupLabel $launcher $ls={-3}>クリップボード</GroupLabel>
      <Launcher />
    </Group>

    <Group $w={250}>
      <GroupBody $pl={4}>
        <ToolStack>
          <ToolRow>
            <Combo $w={157}>メイリオ<Caret /></Combo>
            <Combo $w={40}>14<Caret /></Combo>
            <Gap $w={7} />
            <GrowA $fs={15} $up>A</GrowA>
            <Gap $w={11} />
            <GrowA $fs={12}>A</GrowA>
          </ToolRow>
          <ToolRow>
            <Tool $w={21} $bold>B</Tool>
            <Tool $w={22} $italic>I</Tool>
            <Tool $w={23} $under $bold>U</Tool>
            <ToolCaret $w={12}><Caret /></ToolCaret>
            <RowSep $w={8} />
            <Tool $w={24}><BorderIcon /></Tool>
            <ToolCaret><Caret /></ToolCaret>
            <RowSep $w={10} />
            <Tool $w={22}><FillIcon /></Tool>
            <ToolCaret><Caret /></ToolCaret>
            <Tool $w={26}><FontA>A</FontA></Tool>
            <ToolCaret $w={9}><Caret /></ToolCaret>
            <RowSep $w={10} />
            <Tool $w={21}><Ruby>ア<span>亜</span></Ruby></Tool>
            <ToolCaret $w={12}><Caret /></ToolCaret>
          </ToolRow>
        </ToolStack>
      </GroupBody>
      <GroupLabel $launcher $ls={-3.5}>フォント</GroupLabel>
      <Launcher />
    </Group>

    <Group $w={295}>
      <GroupBody $pl={4}>
        <ToolStack>
          <ToolRow>
            <Tool $w={22}><Lines v="top" /></Tool>
            <Tool $w={22} $on><Lines v="mid" /></Tool>
            <Tool $w={22}><Lines v="bottom" /></Tool>
            <RowSep />
            <Tool $w={22}><OrientIcon /></Tool>
            <ToolCaret><Caret /></ToolCaret>
            <Gap $w={12} />
            <RowSep />
            <WideButton><WrapIcon />折り返して全体を表示する</WideButton>
          </ToolRow>
          <ToolRow>
            <Tool $w={22}><Lines align="left" /></Tool>
            <Tool $w={22} $on><Lines align="center" /></Tool>
            <Tool $w={22}><Lines align="right" /></Tool>
            <RowSep />
            <Tool $w={22}><IndentIcon /></Tool>
            <Tool $w={22}><IndentIcon flip /></Tool>
            <RowSep />
            <WideButton $on><MergeIcon />セルを結合して中央揃え<Caret $ml={8} /></WideButton>
          </ToolRow>
        </ToolStack>
      </GroupBody>
      <GroupLabel $launcher>配置</GroupLabel>
      <Launcher />
    </Group>

    <Group $w={140}>
      <GroupBody $pl={4}>
        <ToolStack>
          <ToolRow>
            <Combo $w={130}>標準<Caret /></Combo>
          </ToolRow>
          <ToolRow>
            <Tool $w={22}><MoneyIcon /></Tool>
            <ToolCaret><Caret /></ToolCaret>
            <Gap $w={2} />
            <Tool $w={22}><NumFormat>%</NumFormat></Tool>
            <Tool $w={20}><NumFormat $fs={14}>,</NumFormat></Tool>
            <RowSep $w={12} />
            <Tool $w={22}><DecimalIcon /></Tool>
            <Tool $w={22}><DecimalIcon inc /></Tool>
          </ToolRow>
        </ToolStack>
      </GroupBody>
      <GroupLabel $launcher>数値</GroupLabel>
      <Launcher />
    </Group>

    <Group $w={361}>
      <GroupBody $pl={5}>
        <Big w={48} mr={3} icon={<CondIcon />} lines={[['条件付き', -1], ['書式', 0]]} caretLine />
        <Big w={64} mr={4} icon={<TableIcon />} lines={[['テーブルとして', -2.9], ['書式設定', 0]]} caretLine />
        <Gallery>
          <GalleryGrid>
            <StyleCell $sel $m="1px 2px 1px 1px" $bg="#fff" $fg="#000">標準</StyleCell>
            <StyleCell $m="4px 2px 5px 4px" $bg="#ffeb9c" $fg="#9c6500" $ls={0.6}>どちらでも...</StyleCell>
            <StyleCell $m="1px 2px 4px 4px" $bg="#ffc7ce" $fg="#9c0006">悪い</StyleCell>
            <StyleCell $m="1px 2px 4px 4px" $bg="#c6efce" $fg="#006100">良い</StyleCell>
          </GalleryGrid>
          <GalleryScroll>
            <GalleryButton $dim><UpTri /></GalleryButton>
            <GalleryButton><DownTri /></GalleryButton>
            <GalleryButton $end><DownTri /></GalleryButton>
          </GalleryScroll>
        </Gallery>
      </GroupBody>
      <GroupLabel $ls={-3.5}>スタイル</GroupLabel>
    </Group>

    <Group $w={135}>
      <GroupBody $pl={4}>
        <Big w={42} icon={<InsertIcon />} lines={[['挿入', 0]]} />
        <Big w={42} icon={<DeleteIcon />} lines={[['削除', 0]]} />
        <Big w={42} icon={<FormatIcon />} lines={[['書式', 0]]} />
      </GroupBody>
      <GroupLabel $ls={-1.5}>セル</GroupLabel>
    </Group>

    <Group $w={208}>
      <GroupBody $pl={7}>
        <SmallColumn $w={96}>
          <SmallRow $ls={0}><SmallIcon><SigmaText>Σ</SigmaText></SmallIcon>オート SUM<Caret $ml={6} /></SmallRow>
          <SmallRow $ls={-3}><SmallIcon><FillDownIcon /></SmallIcon>フィル<Caret $ml={8} /></SmallRow>
          <SmallRow $ls={-3}><SmallIcon><EraserIcon /></SmallIcon>クリア<Caret $ml={8} /></SmallRow>
        </SmallColumn>
        <Big w={60} icon={<SortIcon />} lines={[['並べ替えと', -1.8], ['フィルター', -3.4]]} caretLine />
        <Big w={38} icon={<BinocularsIcon />} lines={[['検索と', -1], ['選択', 0]]} caretLine />
      </GroupBody>
      <GroupLabel>編集</GroupLabel>
    </Group>

    <RibbonFill>
      <Collapse><ChevronUp size={14} strokeWidth={3} /></Collapse>
    </RibbonFill>
  </Ribbon>
)

export default function App() {
  return (
    <>
      <GlobalStyle />
      <Page>
        <Main>
          <TitleBar>
            <Qat $w={30}><ExcelIcon /></Qat>
            <Qat $w={28}><SaveIcon /></Qat>
            <Qat $w={40}><Undo2 size={18} color="#3a75b0" strokeWidth={3} /><Caret /></Qat>
            <Qat $w={42}><Redo2 size={18} color="#bbb" strokeWidth={3} /><Caret /></Qat>
            <Qat $w={10}><Caret /></Qat>
            <Title>training.xlsx - Excel</Title>
            <WinButtons>
              <WinButton $w={32}>?</WinButton>
              <WinButton $w={26}><svg width="13" height="10" viewBox="0 0 13 10"><path d="M.5.5h12v9H.5zM.5 2h12M6.500 8V4M4.500 6l2-2 2 2" fill="none" stroke="#666" /></svg></WinButton>
              <WinButton $w={30}><Minus size={12} strokeWidth={3} /></WinButton>
              <WinButton $w={24}><svg width="10" height="10" viewBox="0 0 10 10"><path d="M2.500 2.500V.5h7v6H7.500M.5 2.500h7v7h-7z" fill="none" stroke="#666" /></svg></WinButton>
              <WinButton $w={36}><X size={14} strokeWidth={3} /></WinButton>
            </WinButtons>
          </TitleBar>
          <TabRow>
            <FileTab>ファイル</FileTab>
            <HomeTab>ホーム</HomeTab>
            <Tab>挿入</Tab>
            <Tab $tight={-2}>ページレイアウト</Tab>
            <Tab>数式</Tab>
            <Tab $tight={-2}>データ</Tab>
            <Tab>校閲</Tab>
            <Tab>表示</Tab>
            <Tab>開発</Tab>
            <Tab $tight={-2}>チーム</Tab>
            <SignIn>サインイン</SignIn>
          </TabRow>
          <RibbonBody />
          <FormulaBar>
            <NameBox>A1<DownTri /></NameBox>
            <Grip />
            <FxBox>
              <X size={20} strokeWidth={2.5} />
              <Check size={20} strokeWidth={3} />
              <FxText>fx</FxText>
            </FxBox>
            <FormulaInput>
              ㈱S＆Cトラベル社員名簿
              <ChevronDown size={14} strokeWidth={4} color="#666" />
            </FormulaInput>
          </FormulaBar>
          <SheetArea>
            <Sheet />
            <VScroll>
              <ScrollButton><UpTri /></ScrollButton>
              <VThumb />
              <VTrack />
              <ScrollButton><DownTri /></ScrollButton>
            </VScroll>
          </SheetArea>
          <TabBar>
            <NavArrow $w={33}><LeftTri /></NavArrow>
            <NavArrow $w={29}><RightTri /></NavArrow>
            <TabSep $ml={38} />
            <SheetTab $w={71} $bg="#4eeacb">社員名簿</SheetTab>
            <TabSep $ml={2} />
            <SheetTab $w={75} $bg="#ff0" $ls={-0.5}>評価グラフ</SheetTab>
            <ActiveTab><ActiveInner>支社別評価</ActiveInner></ActiveTab>
            <AddSheet><Plus size={12} strokeWidth={3} /></AddSheet>
            <HScrollGrip />
            <HScroll>
              <HScrollButton><LeftTri /></HScrollButton>
              <HThumb />
              <HTrack />
              <HScrollButton><RightTri /></HScrollButton>
            </HScroll>
          </TabBar>
          <StatusBar>
            準備完了
            <ReadyMacro />
            <StatusRight>
              <ViewButton $w={38} $on><NormalView /></ViewButton>
              <ViewButton $w={38}><LayoutView /></ViewButton>
              <ViewButton $w={38}><BreakView /></ViewButton>
              <Minus size={10} strokeWidth={4} color="#fff" style={{ marginLeft: 3 }} />
              <ZoomTrack><ZoomThumb /></ZoomTrack>
              <Plus size={12} strokeWidth={3} color="#fff" />
              <ZoomText>95%</ZoomText>
            </StatusRight>
          </StatusBar>
        </Main>
        <Strip><StripMark /></Strip>
        <Band />
      </Page>
    </>
  )
}
